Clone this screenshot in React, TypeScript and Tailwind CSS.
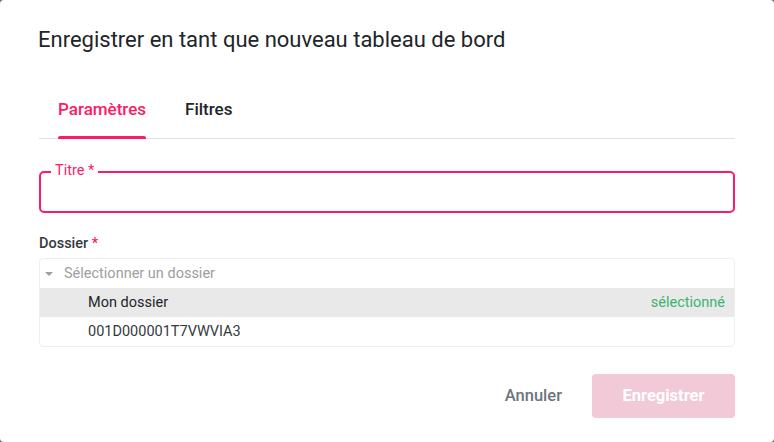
import React from "react";

export default function App() {
  return (
    <div className="w-[774px] h-[442px] bg-[#6b6b6b]" style={{ fontFamily: "Roboto, 'Noto Sans', sans-serif" }}>
      <div className="w-full h-full bg-white rounded-[4px] flex flex-col px-[39px]">
        <h1 className="text-[22px] leading-[24px] text-[#212529] font-normal mt-[28px] ml-[-1px]">
          Enregistrer en tant que nouveau tableau de bord
        </h1>
        <div className="mt-[47px] flex border-b border-[#dee2e6] pl-[19px]">
          <div className="relative pb-[19px] text-[17px] leading-[20px] font-medium text-[#ff1a66]">
            Paramètres
            <div className="absolute left-0 right-0 bottom-[-1px] h-[3px] rounded-t-[2px] bg-[#ff1a66]" />
          </div>
          <div className="ml-[39px] pb-[19px] text-[17px] leading-[20px] font-medium text-[#212529]">Filtres</div>
        </div>
        <div className="relative mt-[32px] h-[42px] border-2 border-[#ff1a66] rounded-[5px]">
          <span className="absolute left-[10px] top-[-9px] bg-white px-[4px] text-[14.5px] leading-[14px] text-[#ff1a66]">
            Titre *
          </span>
        </div>
        <div className="mt-[22px] text-[14.5px] leading-[18px] font-medium text-[#343a40]">
          Dossier <span className="text-[#ff1a66]">*</span>
        </div>
        <div className="mt-[5px] border border-[#eeeeee] rounded-[4px] flex flex-col text-[14.5px]">
          <div className="h-[29px] flex items-center text-[#9e9e9e]">
            <svg width="8" height="4" viewBox="0 0 8 4" className="ml-[5px] mr-[11px]">
              <path d="M0 0 L8 0 L4 4 Z" fill="#9e9e9e" />
            </svg>
            Sélectionner un dossier
          </div>
          <div className="h-[29px] flex items-center bg-[#e9e9e9] pl-[48px] pr-[9px] text-[#212529]">
            <span className="flex-1">Mon dossier</span>
            <span className="text-[#3cb46e]">sélectionné</span>
          </div>
          <div className="h-[29px] flex items-center pl-[48px] text-[#343a40]">001D000001T7VWVIA3</div>
        </div>
        <div className="mt-[27px] flex justify-end items-center">
          <button className="text-[16.5px] font-medium text-[#6c757d] mr-[30px]">Annuler</button>
          <button className="w-[143px] h-[44px] rounded-[4px] bg-[#f2c9d6] text-white text-[16.5px] font-bold">
            Enregistrer
          </button>
        </div>
      </div>
    </div>
  );
}
